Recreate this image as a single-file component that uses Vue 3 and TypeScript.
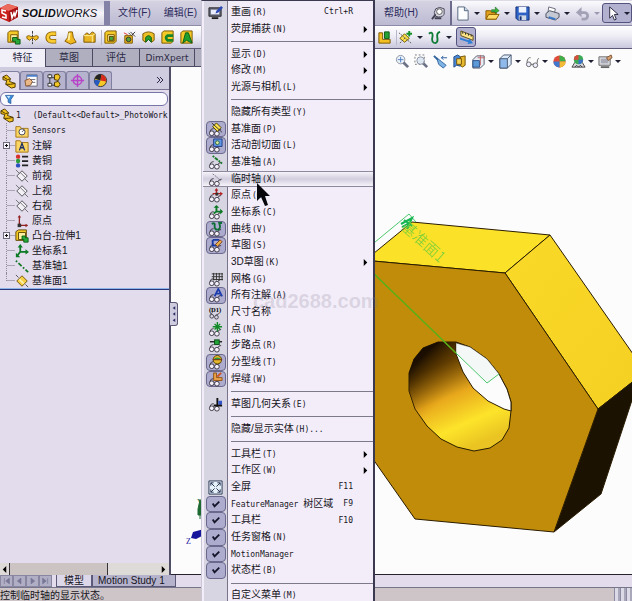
<script setup lang="ts">
import { ref } from 'vue'

interface MenuEntry {
  sep?: boolean
  text?: string
  latin?: string
  key?: string
  icon?: string
  on?: boolean
  sub?: boolean
  hot?: boolean
}
interface Tool { icon: string; label: string; drop?: boolean; pressed?: boolean; sep?: boolean }
interface Node { icon: string; text?: string; latin?: string; plus?: boolean }

const glasses = '<g fill="#f4f0fa" stroke="#3c3844" stroke-width="1"><circle cx="4" cy="12" r="2.5"/><circle cx="9.5" cy="12.5" r="2.5"/><path d="M2 10Q3 7 6 7M11 10Q11 8 14 8" fill="none"/></g>'

const icons: Record<string, string> = {
  extrude: '<path d="M2 3L4 1H13V11L11 13H2Z" fill="#f5c926" stroke="#7a5500"/><path d="M5 5H12V12H5Z" fill="#fff0a0" stroke="#7a5500"/><path d="M7 8L12 8V10L15 10V15H10V12H7Z" fill="#28a838" stroke="#0c5c18"/>',
  revolve: '<path d="M8 1V15" stroke="#333" stroke-dasharray="3 1"/><path d="M2 9Q1 6 4 6Q8 9 12 6Q15 6 14 9L11 11L9 9H7L5 11Z" fill="#f3c023" stroke="#8a5f00"/>',
  sweep: '<path d="M13 4H8A4 4 0 0 0 8 12H13" fill="none" stroke="#8a5f00" stroke-width="5"/><path d="M12.500 4H8A4 4 0 0 0 8 12H12.500" fill="none" stroke="#f9cc34" stroke-width="3"/>',
  loft: '<path d="M6 2H10L11 8L14 13L8 15L2 12L5 8Z" fill="#efb81f" stroke="#8a5f00"/><path d="M7 3L6 11" stroke="#fff0a0" stroke-width="2"/>',
  boundary: '<path d="M2 6L5 3L8 5L11 2L14 4V13H2Z" fill="#e9b422" stroke="#7a5500"/><path d="M2 6H11V13M11 6L14 4" fill="none" stroke="#fff0a0"/>',
  cut: '<path d="M2 3L4 1H14V12L12 14H2Z" fill="#f5c926" stroke="#7a5500"/><path d="M5 5H12V12H5Z" fill="#fff0a0" stroke="#7a5500"/><rect x="7" y="7" width="4" height="4" fill="#3fae46" stroke="#5b4500"/>',
  hole: '<path d="M3 6H11V14H3Z" fill="#f0b91d" stroke="#7a5500"/><circle cx="7" cy="10" r="2.500" fill="#56a038" stroke="#333"/><path d="M9 2L14 7M14 2L10 6M7 3L9 5" stroke="#333"/><path d="M2 3L6 5" stroke="#d33"/>',
  revcut: '<path d="M2 4Q8 0 14 4V11L11 13L8 9L5 13L2 11Z" fill="#eec027" stroke="#7a5500"/><path d="M5 13V8Q8 4 11 8V13L8 10Z" fill="#25a02f" stroke="#0c5c18"/>',
  sweepcut: '<path d="M2 3L4 1H14V12L12 14H2Z" fill="#f5c926" stroke="#7a5500"/><path d="M14 6H8Q5 8 8 11H14" fill="none" stroke="#17842a" stroke-width="3"/>',
  loftcut: '<path d="M2 3L4 1H14V14H2Z" fill="#f5c926" stroke="#7a5500"/><path d="M7 3H10L14 14L8 11L4 14Z" fill="#1fa02e" stroke="#0c5c18"/>',
  assembly: '<path d="M2 3H6V10H14V14H2Z" fill="#f3c023" stroke="#7a5500"/><path d="M8 2H13V9H8Z" fill="#26a134" stroke="#0c5c18"/>',
  refgeo: '<path d="M7 4L12 9L7 13L2 9Z" fill="#ffe04a" stroke="#6a5500"/><path d="M1 3L14 14M2 14L8 8" stroke="#555" stroke-dasharray="2 1"/><path d="M12 1V7M9 4H15" stroke="#18902a" stroke-width="2"/>',
  curve: '<path d="M2 4Q6 1 6 6Q4 14 9 14Q12 13 11 8Q10 3 14 2" fill="none" stroke="#0e7c35" stroke-width="2"/>',
  measure: '<path d="M2 1L15 6V11L2 6Z" fill="#ffe58a" stroke="#594a12"/><path d="M4 2V4M7 3V5M10 4V6M13 5V7" stroke="#222"/><path d="M1 8L10 11L11 9L15 14L9 15L10 13L1 10Z" fill="#2f7fd6"/>',
  newdoc: '<path d="M3 1H10L14 5V15H3Z" fill="#fbfdff" stroke="#53647c"/><path d="M10 1V5H14" fill="#c9d9ec" stroke="#53647c"/>',
  open: '<path d="M1 5H6L7 7H12V14H1Z" fill="#e0a01c" stroke="#8a5a00"/><path d="M4 9H15L12 14H1Z" fill="#ffdc66" stroke="#8a5a00"/><path d="M7 4H11V1L15 5L11 8V6H7Z" fill="#39b13c" stroke="#126b1a" stroke-width=".6"/>',
  save: '<path d="M1 1H15V15H3L1 13Z" fill="#2d62c4" stroke="#132f74"/><rect x="4" y="1" width="8" height="6" fill="#eef4ff"/><rect x="4" y="10" width="8" height="5" fill="#cfd6e4"/><rect x="5" y="11" width="2" height="4" fill="#132f74"/>',
  print: '<path d="M4 1L11 3L10 8H3Z" fill="#fff" stroke="#667"/><path d="M1 8L5 5L15 8V12L11 15L1 12Z" fill="#c4c9d4" stroke="#4b5163"/><path d="M4 12L11 14" stroke="#3a78c8" stroke-width="2"/>',
  undo: '<path d="M4 7H10A3.500 3.500 0 0 1 10 14H7" fill="none" stroke="#a3a1b6" stroke-width="3"/><path d="M1 7L7 1V12Z" fill="#a3a1b6"/>',
  select: '<path d="M5 1V13L8 10L10 15L12 14L10 9H14Z" fill="#fff" stroke="#26263c"/>',
  pin: '<path d="M5 3Q9 0 14 3L14 9Q11 13 5 11Q2 7 5 3Z" fill="#d9d9e2" stroke="#444356"/><path d="M5 9L1 14M4 13H11" stroke="#444356" stroke-width="2"/><circle cx="9" cy="6" r="3" fill="#fff" stroke="#555"/>',
  zoomfit: '<circle cx="6" cy="6" r="4.500" fill="#edf4fb" stroke="#8b93a3"/><path d="M9 9L14 14" stroke="#6d7386" stroke-width="3"/><path d="M6 3V9M3 6H9" stroke="#4e7fc0"/>',
  zoomarea: '<path d="M1 1H11V11H1Z" fill="none" stroke="#777" stroke-dasharray="2 2"/><circle cx="7" cy="7" r="4" fill="#dfe8f2" stroke="#8b93a3"/><path d="M10 10L14 14" stroke="#6d7386" stroke-width="3"/>',
  prev: '<path d="M4 4L9 8L14 12L11 15L6 11Z" fill="#7fb3e4" stroke="#31659e"/><path d="M1 2L5 6" stroke="#31659e" stroke-width="2"/><path d="M15 4H9M11 2L9 4L11 6" fill="none" stroke="#24599a"/>',
  section: '<path d="M2 3L6 1L9 3V13L5 12L2 14Z" fill="#4a87d4" stroke="#234c85"/><path d="M9 3L14 2V12L11 14L9 12Z" fill="#e7b92e" stroke="#735200"/><path d="M5 5H10V11H5Z" fill="#f6d55c" stroke="#735200"/>',
  orient: '<path d="M2 6L6 2H14V11L10 15H2Z" fill="#e7edf5" stroke="#556"/><path d="M2 7H9V14H2Z" fill="#5d9bd8" stroke="#2a5288"/><path d="M10 1V12M7 4H15" stroke="#c06565"/>',
  display: '<path d="M2 5L6 1H14V11L10 15H2Z" fill="#dceafa" stroke="#49566e"/><path d="M2 5H10V15H2Z" fill="#8fb9ea" stroke="#49566e"/><path d="M10 5L14 1" stroke="#49566e"/>',
  hide: '<circle cx="4" cy="11" r="2.500" fill="#eef" stroke="#666"/><circle cx="11" cy="12" r="2.500" fill="#eef" stroke="#666"/><path d="M2 9Q3 3 6 4M13 10Q13 4 15 5M6 11H9" fill="none" stroke="#666"/>',
  appear: '<circle cx="8" cy="8" r="6.500" fill="#e04b3a"/><path d="M8 8V1.500A6.500 6.500 0 0 1 14.500 8Z" fill="#3faf4b"/><path d="M8 8H14.500A6.500 6.500 0 0 1 8 14.500Z" fill="#f3bc35"/><path d="M8 8V14.500A6.500 6.500 0 0 1 1.500 8Z" fill="#4078cf"/>',
  scene: '<path d="M1 14L4 9H12L15 14Z" fill="#d8d8e0" stroke="#444"/><circle cx="8" cy="6" r="5" fill="#3caa54"/><path d="M8 6V1A5 5 0 0 0 3 6Z" fill="#d94c3e"/><path d="M8 6V11A5 5 0 0 0 13 6Z" fill="#3c71c8"/><path d="M4 14L6 12L8 14L10 12L12 14" fill="none" stroke="#333"/>',
  render: '<path d="M1 3H13V12H1Z" fill="#dcdce2" stroke="#666"/><path d="M3 5H11V10H3Z" fill="#a9a9b5"/><path d="M9 4L14 1L15 4L11 7Z" fill="#d8a071" stroke="#7b5538"/><path d="M3 14H12" stroke="#666" stroke-width="2"/>',
  part: '<path d="M1 3L5 1L9 5L8 8L14 10V14L10 15L4 11L5 7L1 6Z" fill="#f2c11e" stroke="#4c3600"/><path d="M1 3L6 6L9 5M4 11L9 11L14 10" fill="none" stroke="#4c3600"/>',
  prop: '<path d="M3 2H14V14H3Z" fill="#fff" stroke="#667"/><path d="M3 2H14V4H3Z" fill="#4a7fcc"/><path d="M6 7H12M6 10H12" stroke="#667"/><path d="M1 8L6 6L9 9L7 13L2 14Z" fill="#eab887" stroke="#875632"/>',
  config: '<path d="M3 1V13H8M3 5H8" fill="none" stroke="#333"/><path d="M8 2L12 1L14 4L12 8L8 7ZM8 10L12 9L14 12L12 15L8 14Z" fill="#f2c624" stroke="#4c3600"/><path d="M1 2H5V5H1ZM1 11H5V14H1Z" fill="#fff" stroke="#333"/>',
  dimx: '<circle cx="8" cy="8" r="4.500" fill="none" stroke="#b845c8" stroke-width="1.500"/><path d="M8 1V15M1 8H15" stroke="#b845c8" stroke-width="1.500"/>',
  ball: '<circle cx="8" cy="8" r="6.500" fill="#f6c928" stroke="#333"/><path d="M8 8L2 6A6.500 6.500 0 0 1 9 1.500Z" fill="#222"/><path d="M8 8L9 1.500A6.500 6.500 0 0 1 14 9Z" fill="#d9291f"/><path d="M8 8L5 14A6.500 6.500 0 0 1 1.500 7Z" fill="#2759c0"/>',
  funnel: '<path d="M2 2H14L10 8V14L6 12V8Z" fill="#3c8fdf" stroke="#1b4f91"/><path d="M4 3H9L7 7Z" fill="#c8e6ff"/>',
  sensors: '<path d="M1 3H6L7 5H15V15H1Z" fill="#fbd663" stroke="#a06f10"/><circle cx="8" cy="9" r="3.500" fill="#fff" stroke="#334"/><path d="M8 9L10 7" stroke="#334"/>',
  notes: '<path d="M1 2H6L7 4H15V15H1Z" fill="#fbd663" stroke="#a06f10"/><path d="M5 13L8 5L11 13M6 10H10" fill="none" stroke="#1c2f6a" stroke-width="1.500"/>',
  material: '<circle cx="3.500" cy="3" r="2.500" fill="#d8302a"/><circle cx="3.500" cy="8" r="2.500" fill="#2a9d38"/><circle cx="3.500" cy="13" r="2.500" fill="#2a4fc0"/><path d="M8 3H15M8 8H15M8 13H15" stroke="#222" stroke-width="2"/>',
  plane: '<path d="M8 2L14 8L8 14L2 8Z" fill="#f4f0f8" stroke="#444"/><path d="M1 1L5 5M11 11L15 15M6 4L12 10" stroke="#666"/>',
  origin: '<path d="M5 13V3M5 13H14" stroke="#942020" stroke-width="1.500"/><path d="M3 4L5 1L7 4ZM12 11L15 13L12 15Z" fill="#942020"/><rect x="3" y="11" width="4" height="4" fill="#333"/>',
  boss: '<path d="M1 3L4 1H13V11L11 13H1Z" fill="#f5c926" stroke="#5a4000"/><path d="M4 4H12V12H4Z" fill="#fff0a0" stroke="#5a4000"/><path d="M8 8H12V10H15V15H10V12H8Z" fill="#28a838" stroke="#0c5c18"/>',
  coord: '<path d="M6 9V3M6 9H13M6 9L2 14" stroke="#0d7a25" stroke-width="2"/><path d="M3 4L6 0L9 4ZM12 6L16 9L12 12ZM1 10V15H6Z" fill="#0d7a25"/>',
  axis: '<path d="M1 2L15 15" stroke="#157a26" stroke-width="2" stroke-dasharray="2 2 5 2"/>',
  planegold: '<path d="M8 2L14 8L8 14L2 8Z" fill="#f6cf45" stroke="#6a4a00"/><path d="M1 1L4 4M12 12L15 15" stroke="#444"/><path d="M5 6L10 11" stroke="#fff3b0" stroke-width="2"/>',
  redraw: '<path d="M1 3H14V12H1Z" fill="#65677a" stroke="#222"/><path d="M3 5H12V10H3Z" fill="#e8ecf8"/><path d="M4 14H11" stroke="#222" stroke-width="2"/><path d="M14 1L9 6L8 9L11 8L16 3Z" fill="#2947b5"/>',
  full: '<path d="M1 1H15V15H1Z" fill="#e6f1fa" stroke="#25324f"/><path d="M3 6V3H6M10 3H13V6M13 10V13H10M6 13H3V10M3 3L7 7M13 3L9 7M3 13L7 9M13 13L9 9" fill="none" stroke="#25324f"/>',
  check: '<path d="M5 7L7 10L12 5" fill="none" stroke="#15152a" stroke-width="2"/>',
  gPlane: glasses + '<path d="M9 1L14 6L10 10L5 5Z" fill="#ffe14a" stroke="#4c4200"/><path d="M4 1L15 11" stroke="#333"/>',
  gSection: glasses + '<path d="M6 1H15V9H6Z" fill="#5f93e4" stroke="#1f3d82"/><circle cx="10" cy="5" r="2" fill="#dfe9a0" stroke="#2d6b3a"/>',
  gAxis: glasses + '<path d="M5 1L15 9" stroke="#157a26" stroke-width="2" stroke-dasharray="2 1 4 1"/>',
  gTemp: glasses + '<path d="M5 2L9 5L13 9L15 7" fill="none" stroke="#777381" stroke-dasharray="2 1"/>',
  gOrigin: glasses + '<path d="M9 8V1M5 6H15" stroke="#b22020" stroke-width="1.500"/><path d="M7 3L9 0L11 3ZM13 4L16 6L13 8Z" fill="#b22020"/><rect x="8" y="5" width="3" height="3" fill="#333"/>',
  gCoord: glasses + '<path d="M9 7V1M9 7H15M9 7L6 9" stroke="#0d7a25" stroke-width="2"/><path d="M6 3L9 0L12 3ZM13 4L16 7L13 10Z" fill="#0d7a25"/>',
  gCurve: glasses + '<path d="M4 2Q8 0 7 4Q7 9 11 8Q14 7 12 1H15" fill="none" stroke="#0e6f35" stroke-width="2"/>',
  gSketch: glasses + '<path d="M5 2H12M5 2V8H10" fill="none" stroke="#1a3ba2" stroke-width="2"/><path d="M8 7L13 2L15 4L10 9Z" fill="#efb24a" stroke="#7d3e12"/>',
  gGrid: glasses + '<path d="M6 1V9M9 1V9M12 1V9M15 1V9M4 2H16M4 5H16M5 8H16" stroke="#333"/>',
  gNote: glasses + '<path d="M7 9L11 1L15 9M8 6H14" fill="none" stroke="#1d3fae" stroke-width="2"/>',
  gPoint: glasses + '<path d="M10 0V10M5 5H15M7 2L13 8M13 2L7 8" stroke="#138a28" stroke-width="1.500"/>',
  gRoute: glasses + '<path d="M2 4H15" stroke="#222" stroke-width="1.500"/><rect x="7" y="2" width="5" height="5" fill="#23a238" stroke="#0c4c18"/>',
  gPart: glasses + '<circle cx="10" cy="5" r="4.500" fill="#e4b72b" stroke="#5a4300"/><path d="M6 5A4.500 4.500 0 0 1 14 5Z" fill="#2e9a3e"/><path d="M5 5H15" stroke="#7a2a11"/>',
  gWeld: glasses + '<path d="M6 1H9V6H15V9H6Z" fill="#eba64a" stroke="#92500f"/><path d="M10 5L14 1" stroke="#d0521c" stroke-width="2"/>',
  gRel: glasses + '<path d="M10 1V9M6 9H15" stroke="#111" stroke-width="2"/><rect x="11" y="4" width="4" height="4" fill="#3455c8"/>',
}

const menu: MenuEntry[] = [
  { text: '重画', latin: '(R)', key: 'Ctrl+R', icon: 'redraw' },
  { text: '荧屏捕获', latin: '(N)', sub: true },
  { sep: true },
  { text: '显示', latin: '(D)', sub: true },
  { text: '修改', latin: '(M)', sub: true },
  { text: '光源与相机', latin: '(L)', sub: true },
  { sep: true },
  { text: '隐藏所有类型', latin: '(Y)' },
  { text: '基准面', latin: '(P)', icon: 'gPlane', on: true },
  { text: '活动剖切面', latin: '(L)', icon: 'gSection', on: true },
  { text: '基准轴', latin: '(A)', icon: 'gAxis' },
  { text: '临时轴', latin: '(X)', icon: 'gTemp', hot: true },
  { text: '原点', latin: '(O)', icon: 'gOrigin' },
  { text: '坐标系', latin: '(C)', icon: 'gCoord' },
  { text: '曲线', latin: '(V)', icon: 'gCurve', on: true },
  { text: '草图', latin: '(S)', icon: 'gSketch', on: true },
  { text: '3D草图', latin: '(K)', sub: true },
  { text: '网格', latin: '(G)', icon: 'gGrid' },
  { text: '所有注解', latin: '(A)', icon: 'gNote', on: true },
  { text: '尺寸名称', icon: 'dim' },
  { text: '点', latin: '(N)', icon: 'gPoint' },
  { text: '步路点', latin: '(R)', icon: 'gRoute' },
  { text: '分型线', latin: '(T)', icon: 'gPart', on: true },
  { text: '焊缝', latin: '(W)', icon: 'gWeld', on: true },
  { sep: true },
  { text: '草图几何关系', latin: '(E)', icon: 'gRel' },
  { sep: true },
  { text: '隐藏/显示实体', latin: '(H)...' },
  { sep: true },
  { text: '工具栏', latin: '(T)', sub: true },
  { text: '工作区', latin: '(W)', sub: true },
  { text: '全屏', key: 'F11', icon: 'full' },
  { latin: 'FeatureManager ', text: '树区域', key: 'F9', icon: 'check', on: true },
  { text: '工具栏', key: 'F10', icon: 'check', on: true },
  { text: '任务窗格', latin: '(N)', icon: 'check', on: true },
  { latin: 'MotionManager', icon: 'check', on: true },
  { text: '状态栏', latin: '(B)', icon: 'check', on: true },
  { sep: true },
  { text: '自定义菜单', latin: '(M)' },
]
const latinFirst = (m: MenuEntry) => !!m.latin && !m.latin.startsWith('(')

const quick: Tool[] = [
  { icon: 'newdoc', label: '新建', drop: true },
  { icon: 'open', label: '打开', drop: true },
  { icon: 'save', label: '保存', drop: true },
  { icon: 'print', label: '打印', drop: true },
  { icon: 'undo', label: '撤消', drop: true },
]
const features: Tool[] = [
  { icon: 'extrude', label: '拉伸凸台' },
  { icon: 'revolve', label: '旋转凸台' },
  { icon: 'sweep', label: '扫描' },
  { icon: 'loft', label: '放样' },
  { icon: 'boundary', label: '边界' },
  { icon: 'cut', label: '拉伸切除', sep: true },
  { icon: 'hole', label: '异型孔' },
  { icon: 'revcut', label: '旋转切除' },
  { icon: 'sweepcut', label: '扫描切除' },
  { icon: 'loftcut', label: '放样切除' },
]
const views: Tool[] = [
  { icon: 'zoomfit', label: '整屏显示' },
  { icon: 'zoomarea', label: '局部放大' },
  { icon: 'prev', label: '上一视图' },
  { icon: 'section', label: '剖面视图' },
  { icon: 'orient', label: '视图定向', drop: true },
  { icon: 'display', label: '显示样式', drop: true },
  { icon: 'hide', label: '隐藏项目', drop: true },
  { icon: 'appear', label: '外观' },
  { icon: 'scene', label: '布景', drop: true },
  { icon: 'render', label: '视图设定', drop: true },
]
const nodes: Node[] = [
  { icon: 'sensors', latin: 'Sensors' },
  { icon: 'notes', text: '注解', plus: true },
  { icon: 'material', text: '黄铜' },
  { icon: 'plane', text: '前视' },
  { icon: 'plane', text: '上视' },
  { icon: 'plane', text: '右视' },
  { icon: 'origin', text: '原点' },
  { icon: 'boss', text: '凸台-拉伸1', plus: true },
  { icon: 'coord', text: '坐标系1' },
  { icon: 'axis', text: '基准轴1' },
  { icon: 'planegold', text: '基准面1' },
]
const tabs = ['特征', '草图', '评估', 'DimXpert']
const panes = ['part', 'prop', 'config', 'dimx', 'ball']
const navs = ['M4 3V11M11 3L6 7L11 11Z', 'M9 3L4 7L9 11Z', 'M5 3L10 7L5 11Z', 'M10 3V11M3 3L8 7L3 11Z']
const activeTab = ref(0)
const filter = ref('')
</script>

<template>
  <div class="app">
    <header class="title">
      <div class="brand">
        <svg class="cube" viewBox="0 0 18 18" aria-hidden="true">
          <path d="M0 4L8 0L18 3V13L9 18L0 14Z" fill="#c81f1c" />
          <path d="M0 4L8 0L18 3L9 7Z" fill="#ec6a5c" />
          <path d="M9 7L18 3V13L9 18Z" fill="#a51215" />
          <path d="M6 7L2 6V9L6 11V14L2 13M11 8L12 14L14 9L15 12L17 6" fill="none" stroke="#fff" stroke-width="1.500" />
        </svg>
        <span class="name"><b>SOLID</b>WORKS</span>
      </div>
      <nav class="bar">
        <button>文件(F)</button>
        <button>编辑(E)</button>
        <button class="help">帮助(H)</button>
        <button class="tool" aria-label="固定"><svg class="ic" viewBox="0 0 16 16" v-html="icons.pin" /></button>
      </nav>
      <div class="quick">
        <button v-for="t in quick" :key="t.icon" class="tool cell" :aria-label="t.label">
          <svg class="ic" viewBox="0 0 16 16" v-html="icons[t.icon]" /><i class="drop" :class="{ dim: t.icon === 'undo' }" />
        </button>
        <button class="tool cell pressed" aria-label="选择">
          <svg class="ic" viewBox="0 0 16 16" v-html="icons.select" /><i class="drop" />
        </button>
      </div>
    </header>

    <div class="ribbon">
      <div class="group main">
        <button v-for="t in features" :key="t.icon" class="tool" :class="{ split: t.sep }" :aria-label="t.label">
          <svg class="ic" viewBox="0 0 16 16" v-html="icons[t.icon]" />
        </button>
      </div>
      <div class="group">
        <button class="tool" aria-label="装配体"><svg class="ic" viewBox="0 0 16 16" v-html="icons.assembly" /></button>
        <button class="tool cell split" aria-label="参考几何体"><svg class="ic" viewBox="0 0 16 16" v-html="icons.refgeo" /><i class="drop" /></button>
        <button class="tool cell" aria-label="曲线"><svg class="ic" viewBox="0 0 16 16" v-html="icons.curve" /><i class="drop" /></button>
        <button class="tool pressed instant" aria-label="Instant3D"><svg class="ic" viewBox="0 0 16 16" v-html="icons.measure" /></button>
      </div>
    </div>

    <main class="work">
      <div class="tabs" role="tablist">
        <button v-for="(t, i) in tabs" :key="t" role="tab" :class="{ active: activeTab === i }" @click="activeTab = i">{{ t }}</button>
        <span class="rest" />
      </div>

      <aside class="panel">
        <div class="panes">
          <button v-for="(p, i) in panes" :key="p" :class="{ active: i === 0 }" :aria-label="p">
            <svg class="ic" viewBox="0 0 16 16" v-html="icons[p]" />
          </button>
          <button class="more" aria-label="更多">
            <svg viewBox="0 0 8 8"><path d="M1 1L4 4L1 7M4 1L7 4L4 7" fill="none" stroke="#2b2b45" /></svg>
          </button>
        </div>
        <label class="filter">
          <svg class="small" viewBox="0 0 16 16" v-html="icons.funnel" />
          <input v-model="filter" type="text" aria-label="过滤器" />
        </label>
        <div class="root">
          <svg class="ic" viewBox="0 0 16 16" v-html="icons.part" />
          <span class="mono">1</span><span class="mono cfg">(Default&lt;&lt;Default&gt;_PhotoWork</span>
        </div>
        <ul class="tree">
          <li v-for="(n, i) in nodes" :key="i">
            <span class="rail"><button v-if="n.plus" class="plus" aria-label="展开" /></span>
            <svg class="node" viewBox="0 0 16 16" v-html="icons[n.icon]" />
            <span :class="{ mono: n.latin }">{{ n.text || n.latin }}</span>
          </li>
        </ul>
        <div class="rollback" />
        <div class="scroll">
          <button aria-label="向左"><svg viewBox="0 0 8 8"><path d="M6 0L2 4L6 8Z" /></svg></button>
          <span class="track"><span class="thumb" /></span>
          <button aria-label="向右"><svg viewBox="0 0 8 8"><path d="M2 0L6 4L2 8Z" /></svg></button>
        </div>
        <button class="handle" aria-label="折叠面板">
          <svg viewBox="0 0 8 24"><path d="M6 3L3 5L6 7ZM6 10L3 12L6 14ZM6 17L3 19L6 21Z" fill="#2e2e66" /></svg>
        </button>
      </aside>

      <section class="view">
        <svg class="scene" viewBox="171 48 461 527" preserveAspectRatio="xMaxYMin slice" aria-label="模型">
          <defs>
            <linearGradient id="bore" gradientUnits="userSpaceOnUse" x1="428" y1="345" x2="472" y2="446">
              <stop offset="0" stop-color="#2c1900" />
              <stop offset=".2" stop-color="#5a3902" />
              <stop offset=".5" stop-color="#e8a81c" />
              <stop offset=".78" stop-color="#fde42a" />
              <stop offset="1" stop-color="#eac422" />
            </linearGradient>
            <linearGradient id="shade" gradientUnits="userSpaceOnUse" x1="408" y1="370" x2="440" y2="402">
              <stop offset="0" stop-color="#160b00" stop-opacity=".85" />
              <stop offset="1" stop-color="#c07b00" stop-opacity="0" />
            </linearGradient>
            <linearGradient id="side" x1="0" y1="0" x2="1" y2="1">
              <stop offset="0" stop-color="#fad928" />
              <stop offset="1" stop-color="#f4d022" />
            </linearGradient>
          </defs>
          <g stroke="#2a1c00" stroke-width="1" stroke-linejoin="round">
            <path d="M340 280L412 221L550 234L505 272L340 257Z" fill="#fbe127" />
            <path d="M505 272L550 234L640 363V375L598 408Z" fill="url(#side)" />
            <path d="M598 408L640 375L601 493L554 531Z" fill="#1b1202" />
            <path d="M340 257L505 272L598 408L554 531L415 518L340 411Z" fill="#c08c0a" />
            <path d="M438 341L456 341L470 346L487 358L499 373L507 388L511 401L511 410L509 427L502 439L490 447L474 450L457 446L441 438L427 425L415 408L409 390L409 372L414 358L423 347Z" fill="url(#bore)" />
            <path d="M438 341L456 341L463 371L488 401L511 410L509 427L502 439L490 447L474 450L457 446L441 438L427 425L415 408L409 390L409 372L414 358L423 347Z" fill="url(#shade)" stroke="none" />
            <path d="M456 342L470 346L487 358L499 373L507 388L511 401L511 410L504 408L488 400L473 387L463 371L456 353Z" fill="#fdfcfd" />
          </g>
          <path d="M456 352L487 382L499 373L487 358L470 346L456 342Z" fill="#eef6f3" opacity=".6" />
          <path d="M340 270L409 213L416 221M340 240L487 382L499 373" fill="none" stroke="#4cc76c" />
          <path d="M340 240L456 352" fill="none" stroke="#5cae13" stroke-width="1.500" />
          <path d="M401 223L412 217L407 228M404 219L412 225M402 226L411 221" fill="none" stroke="#16b552" stroke-width="2" />
          <text class="label" transform="translate(400 227) rotate(42)">基准面1</text>
          <path d="M200 518V498M198 508L200 499L203 508V514H198Z" fill="#1d6b33" stroke="#1d6b33" />
          <path d="M191 537L193 531L204 528V534L196 538Z" fill="#16169c" />
          <text class="triad" x="186" y="543" fill="#16169c">Z</text>
          <text class="triad" x="197" y="504" fill="#1d6b33">Y</text>
        </svg>
        <div class="heads">
          <button v-for="t in views" :key="t.icon" class="tool" :aria-label="t.label">
            <svg class="ic" viewBox="0 0 16 16" v-html="icons[t.icon]" /><i v-if="t.drop" class="drop" />
          </button>
        </div>
      </section>
    </main>

    <div class="sheets">
      <button v-for="(n, i) in navs" :key="i" class="nav" :aria-label="'页 ' + (i + 1)">
        <svg viewBox="0 0 14 14"><path :d="n" fill="#777696" stroke="#777696" /></svg>
      </button>
      <button class="sheet active">模型</button>
      <button class="sheet">Motion Study 1</button>
    </div>
    <footer class="status"><span>控制临时轴的显示状态。</span><i class="grip" /></footer>

    <ul class="menu" role="menu">
      <li v-for="(m, i) in menu" :key="i" :class="m.sep ? 'sep' : 'item'" :role="m.sep ? 'separator' : 'none'">
        <button v-if="!m.sep" role="menuitem" :class="{ hot: m.hot }">
          <span class="gutter">
            <span class="box" :class="{ on: m.on }">
              <svg v-if="m.icon === 'dim'" class="ic" viewBox="0 0 16 16">
                <text x="1" y="7" class="dimtext">(D1)</text>
                <path d="M2 10L5 8M8 11L12 9" stroke="#44404c" />
                <circle cx="4" cy="12" r="2" fill="none" stroke="#44404c" />
                <circle cx="9" cy="13" r="2" fill="none" stroke="#44404c" />
              </svg>
              <svg v-else-if="m.icon" class="ic" viewBox="0 0 16 16" v-html="icons[m.icon]" />
            </span>
          </span>
          <span class="cap">
            <template v-if="latinFirst(m)"><span class="mono">{{ m.latin }}</span>{{ m.text }}</template>
            <template v-else>{{ m.text }}<span class="mono key">{{ m.latin }}</span></template>
          </span>
          <kbd v-if="m.key" class="mono">{{ m.key }}</kbd>
          <svg v-if="m.sub" class="sub" viewBox="0 0 8 8"><path d="M2 0L6 4L2 8Z" /></svg>
        </button>
      </li>
    </ul>
    <span class="mark">cad2688.com</span>
    <svg class="cursor" viewBox="0 0 14 26" aria-hidden="true">
      <path d="M1 1V19L5 15L9 24L12 23L9 14H14Z" fill="#08080c" />
    </svg>
  </div>
</template>

<style>
body {
  margin: 0;
}
</style>

<style scoped>
.app {
  position: relative;
  display: flex;
  flex-direction: column;
  height: 100vh;
  overflow: hidden;
  font: 10px/14px "Liberation Sans", "Noto Sans CJK SC", sans-serif;
  color: #16141c;
  background: #e2dcec;
}
button {
  margin: 0;
  padding: 0;
  border: 0;
  background: none;
  font: inherit;
  color: inherit;
}
ul {
  margin: 0;
  padding: 0;
  list-style: none;
}
svg {
  display: block;
  flex: none;
}
.ic {
  width: 15px;
  height: 15px;
}
.mono {
  font: 8px/14px "DejaVu Sans Mono", monospace;
  white-space: pre;
}
.tool {
  display: flex;
  align-items: center;
  justify-content: center;
}
.cell {
  width: 30px;
  gap: 4px;
}
.drop {
  border: 3px solid transparent;
  border-top-color: #1f1f33;
  border-bottom: 0;
}
.drop.dim {
  border-top-color: #9c9ab0;
}
.pressed {
  height: 20px;
  box-sizing: border-box;
  border: 1px solid #54527e;
  border-radius: 3px;
  background: #b3b1d0;
}

.title {
  display: flex;
  flex: 0 0 24px;
  border-top: 1px solid #dcdbe6;
  background: linear-gradient(#fbfbfd, #dedcea 60%, #c6c4da);
}
.brand {
  display: flex;
  align-items: center;
  gap: 4px;
  flex: 0 0 104px;
  background: linear-gradient(#cfcede, #f5f4f9 50%, #d6d4e2);
}
.cube {
  width: 18px;
  height: 18px;
}
.name {
  font-size: 11px;
  font-style: italic;
  color: #0c0c12;
}
.bar {
  display: flex;
  flex: 1;
  align-items: center;
  gap: 13px;
  padding: 0 4px 0 8px;
  border-left: 6px solid #8482a6;
  border-right: 2px solid #6d6b8c;
  background: linear-gradient(#d5d3e2, #bcbad2);
  color: #2b2a5c;
}
.help {
  margin-left: auto;
}
.quick {
  display: flex;
  align-items: center;
}

.ribbon {
  display: flex;
  flex: 0 0 22px;
  border-top: 1px solid #8d8ba8;
  border-bottom: 1px solid #5d5b78;
  background: linear-gradient(#ffffff, #ecebf4 50%, #c9c7dc);
}
.group {
  display: flex;
  align-items: center;
  gap: 4px;
}
.group .split {
  border-left: 1px solid #b8b6cc;
  padding-left: 1px;
}
.group.main {
  flex: 0 0 371px;
  padding-left: 6px;
}
.group .cell {
  width: 26px;
}
.instant {
  width: 20px;
}

.work {
  display: grid;
  grid-template: 18px 1fr / 171px 1fr;
  flex: 1;
  min-height: 0;
}
.tabs {
  grid-area: 1 / 1 / 2 / 3;
  z-index: 1;
  display: flex;
  justify-self: start;
  width: 230px;
  border-bottom: 1px solid #4c4a62;
}
.tabs button {
  flex: 0 0 47px;
  box-sizing: border-box;
  border-right: 1px solid #4c4a62;
  background: #b0afc0;
  color: #2b2a44;
}
.tabs button:nth-child(4) {
  flex-basis: 55px;
  font: 9px/14px "DejaVu Sans", sans-serif;
}
.tabs button.active {
  flex-basis: 46px;
  margin-bottom: -1px;
  background: #f1eff7;
}
.rest {
  flex: 1;
  background: #b0afc0;
}

.panel {
  position: relative;
  z-index: 1;
  grid-area: 2 / 1;
  display: flex;
  flex-direction: column;
  border-right: 2px solid #504e66;
  background: #e2dcec;
  min-width: 0;
}
.panes {
  display: flex;
  align-items: flex-end;
  height: 22px;
  background: #cfccdf;
  border-bottom: 1px solid #77758f;
}
.panes button {
  display: flex;
  align-items: center;
  justify-content: center;
  flex: 0 0 23px;
  height: 18px;
  box-sizing: border-box;
  border: 1px solid #8280a0;
  border-bottom: 0;
  border-radius: 3px 3px 0 0;
  background: #b5b3cd;
}
.panes button.active {
  flex-basis: 20px;
  height: 19px;
  margin-bottom: -1px;
  border-left: 0;
  background: #e2dcec;
}
.panes .more {
  margin-left: auto;
  flex-basis: 18px;
  border: 0;
  background: none;
}
.more svg {
  width: 8px;
  height: 8px;
}
.filter {
  display: flex;
  align-items: center;
  gap: 2px;
  height: 12px;
  margin: 2px 1px 2px 0;
  padding-left: 3px;
  border: 1px solid #7775a8;
  border-radius: 6px;
  background: #fbfaff;
}
.filter input {
  flex: 1;
  min-width: 0;
  height: 10px;
  padding: 0;
  border: 0;
  outline: 0;
  background: none;
  font: inherit;
}
.small {
  width: 11px;
  height: 11px;
}
.root {
  display: flex;
  align-items: center;
  height: 15px;
  overflow: hidden;
}
.root .mono {
  margin-left: 1px;
}
.root .cfg {
  margin-left: 12px;
}
.tree li {
  display: flex;
  align-items: center;
  height: 15px;
}
.node {
  width: 14px;
  height: 14px;
  margin-right: 3px;
}
.rail {
  position: relative;
  flex: 0 0 8px;
  height: 15px;
  margin-left: 6px;
  border-left: 1px dotted #8e8a9c;
  background: linear-gradient(#a9a5b6, #a9a5b6) 0 7px / 8px 1px no-repeat;
}
.tree li:last-child .rail {
  height: 8px;
  align-self: flex-start;
}
.plus {
  position: absolute;
  top: 4px;
  left: -4px;
  width: 7px;
  height: 7px;
  border: 1px solid #6d6a7c;
  background:
    linear-gradient(#111, #111) center / 3px 1px no-repeat,
    linear-gradient(#111, #111) center / 1px 3px no-repeat,
    #f6f3fa;
}
.rollback {
  height: 1px;
  border-top: 1px solid #8fb6e8;
  background: #28397c;
}
.scroll {
  display: flex;
  height: 12px;
  margin-top: auto;
  background: #dedad8;
}
.scroll button {
  display: flex;
  align-items: center;
  justify-content: center;
  width: 9px;
}
.scroll button:last-child {
  width: 12px;
}
.scroll svg {
  width: 7px;
  height: 7px;
}
.track {
  flex: 1;
}
.thumb {
  display: block;
  box-sizing: border-box;
  width: 67%;
  height: 100%;
  border: solid #37333b;
  border-width: 0 1px;
  background: #cbc4c2;
}
.handle {
  position: absolute;
  top: 235px;
  right: -9px;
  border: 1px solid #5a5874;
  border-left: 0;
  border-radius: 0 3px 3px 0;
  background: #cfccdf;
}
.handle svg {
  width: 7px;
  height: 22px;
}

.view {
  position: relative;
  grid-area: 1 / 2 / 3 / 3;
  min-width: 0;
  min-height: 0;
  overflow: hidden;
  background: #fdfcfd;
  border-bottom: 1px solid #24222c;
}
.scene {
  position: absolute;
  inset: 0;
  width: 100%;
  height: 100%;
}
.label {
  font: 300 15px "Noto Sans CJK SC", sans-serif;
  fill: #74cf3c;
}
.triad {
  font: 8px "Liberation Serif", serif;
}
.heads {
  position: relative;
  display: flex;
  justify-content: flex-end;
  gap: 4px;
  padding: 5px 11px 0 0;
}
.heads .tool {
  gap: 2px;
}

.sheets {
  display: flex;
  flex: 0 0 12px;
  border-bottom: 1px solid #77758a;
  background: #e2dcec;
}
.nav {
  width: 13px;
  box-sizing: border-box;
  border: 1px solid #8886a0;
  background: #b0aec4;
}
.nav svg {
  width: 11px;
  height: 10px;
}
.sheet {
  padding: 0 10px 0 5px;
  border: 1px solid #5c5a78;
  border-top: 0;
  background: #b5b3cb;
  line-height: 11px;
}
.sheet.active {
  margin-left: 4px;
  padding: 0 7px;
  background: #dcd8ea;
}
.status {
  display: flex;
  justify-content: space-between;
  flex: 0 0 13px;
  overflow: hidden;
  background: #cdc5c8;
  line-height: 15px;
}
.grip {
  width: 18px;
  background: repeating-linear-gradient(90deg, #8d8ba3 0 1px, #dcdae6 1px 4px, #a9a7ba 4px 6px);
}

.menu {
  position: absolute;
  z-index: 3;
  top: 0;
  bottom: -3px;
  left: 201px;
  width: 170px;
  display: flex;
  flex-direction: column;
  padding: 3px 0 0 1px;
  border: solid #3b3950;
  border-width: 1px 2px 0 1px;
  border-left-color: #c9c6d6;
  background: linear-gradient(90deg, #f3edf9 2px, #d8d5e2 2px 25px, #77748a 25px 26px, #f3edf9 26px);
}
.item {
  flex: 2 1 0;
  min-height: 0;
}
.sep {
  flex: 1 1 0;
  margin-left: 28px;
  min-height: 0;
  background: linear-gradient(#7d7a8c, #7d7a8c) 0 50% / 100% 1px no-repeat;
}
.item button {
  display: flex;
  align-items: center;
  width: 100%;
  height: 100%;
  box-sizing: border-box;
  text-align: left;
  white-space: nowrap;
}
.item button.hot {
  border-top: 1px solid #8d8a9e;
  border-bottom: 1px solid #8d8a9e;
  background: linear-gradient(#f6f3fa, #d2cede 50%, #f6f3fa);
}
.gutter {
  display: flex;
  align-items: center;
  justify-content: center;
  flex: 0 0 28px;
  height: 100%;
  padding-right: 3px;
  box-sizing: border-box;
}
.box {
  display: flex;
  align-items: center;
  justify-content: center;
  width: 20px;
  height: 100%;
  box-sizing: border-box;
}
.box.on {
  border: 1px solid #6a688c;
  border-radius: 4px;
  background: #aeacce;
}
.dimtext {
  font: bold 7px "Liberation Serif", serif;
}
.cap {
  flex: 1;
}
.key {
  margin-left: 1px;
}
.sub {
  width: 7px;
  height: 7px;
  margin-right: 4px;
}
.menu kbd {
  margin-right: 20px;
}
.mark {
  position: absolute;
  z-index: 4;
  top: 289px;
  left: 253px;
  font: bold 20px/24px "Liberation Sans", sans-serif;
  color: rgba(130, 122, 140, 0.22);
  pointer-events: none;
}
.cursor {
  position: absolute;
  z-index: 5;
  top: 182px;
  left: 256px;
  width: 14px;
  height: 26px;
}
</style>
